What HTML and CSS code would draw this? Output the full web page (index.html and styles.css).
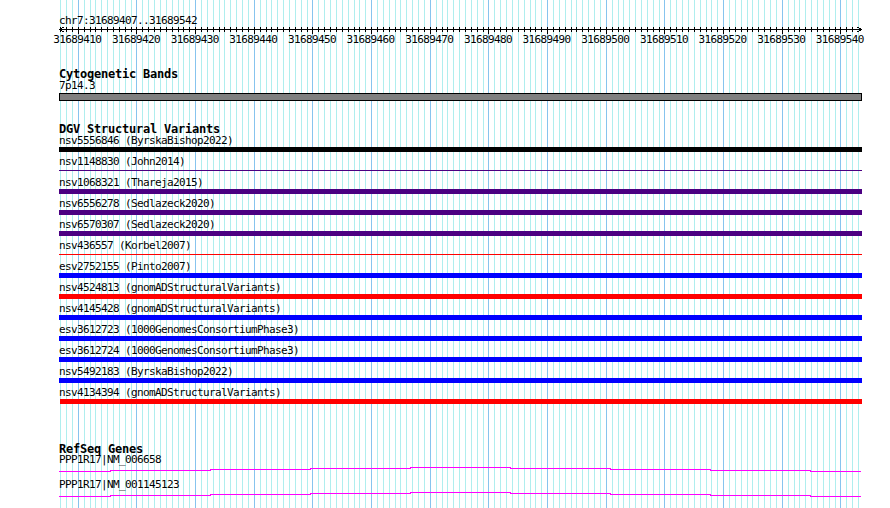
FILE: index.html
```html
<!DOCTYPE html>
<html>
<head>
<meta charset="utf-8">
<title>chr7:31689407..31689542</title>
<link rel="stylesheet" href="styles.css">
</head>
<body>
<svg id="grid" class="grid" width="890" height="508"></svg>
<div class="panel">
  <div class="txt">chr7:31689407..31689542</div>
  <svg id="ruler" class="ruler" width="890" height="7"></svg>
  <div class="labels">
    <span>31689410</span><span>31689420</span><span>31689430</span><span>31689440</span><span>31689450</span><span>31689460</span><span>31689470</span><span>31689480</span><span>31689490</span><span>31689500</span><span>31689510</span><span>31689520</span><span>31689530</span><span>31689540</span>
  </div>

  <div class="title cyto-title">Cytogenetic Bands</div>
  <div class="txt">7p14.3</div>
  <div class="band"></div>

  <div class="title dgv-title">DGV Structural Variants</div>
  <div class="row"><div class="txt">nsv5556846 (ByrskaBishop2022)</div><div class="bar black"></div></div>
  <div class="row"><div class="txt">nsv1148830 (John2014)</div><div class="line purple"></div></div>
  <div class="row"><div class="txt">nsv1068321 (Thareja2015)</div><div class="bar purple"></div></div>
  <div class="row"><div class="txt">nsv6556278 (Sedlazeck2020)</div><div class="bar purple"></div></div>
  <div class="row"><div class="txt">nsv6570307 (Sedlazeck2020)</div><div class="bar purple"></div></div>
  <div class="row"><div class="txt">nsv436557 (Korbel2007)</div><div class="line red"></div></div>
  <div class="row"><div class="txt">esv2752155 (Pinto2007)</div><div class="bar blue"></div></div>
  <div class="row"><div class="txt">nsv4524813 (gnomADStructuralVariants)</div><div class="bar red"></div></div>
  <div class="row"><div class="txt">nsv4145428 (gnomADStructuralVariants)</div><div class="bar blue"></div></div>
  <div class="row"><div class="txt">esv3612723 (1000GenomesConsortiumPhase3)</div><div class="bar blue"></div></div>
  <div class="row"><div class="txt">esv3612724 (1000GenomesConsortiumPhase3)</div><div class="bar blue"></div></div>
  <div class="row"><div class="txt">nsv5492183 (ByrskaBishop2022)</div><div class="bar blue"></div></div>
  <div class="row"><div class="txt">nsv4134394 (gnomADStructuralVariants)</div><div class="bar red inset"></div></div>

  <div class="title ref-title">RefSeq Genes</div>
  <div class="gene">
    <div class="txt">PPP1R17|NM_006658</div>
    <svg class="intron" width="803" height="13"><path d="M0 5.5H51V4.5H151V3.5H251V2.5H351V1.5H451V2.5H551V3.5H651V4.5H751V5.5H802"/></svg>
  </div>
  <div class="gene">
    <div class="txt">PPP1R17|NM_001145123</div>
    <svg class="intron" width="803" height="13"><path d="M0 5.5H51V4.5H151V3.5H251V2.5H351V1.5H451V2.5H551V3.5H651V4.5H751V5.5H802"/></svg>
  </div>
</div>
<script src="grid.js"></script>
</body>
</html>
```

FILE: styles.css
```css
html, body {
  margin: 0;
  padding: 0;
  background: #ffffff;
}
body {
  width: 890px;
  height: 508px;
  overflow: hidden;
  position: relative;
  font-family: "DejaVu Sans Mono", "Liberation Mono", monospace;
  color: #000;
}
.grid {
  position: absolute;
  left: 0;
  top: 0;
  z-index: 0;
}
.grid .minor { fill: #afeeee; }
.grid .major { fill: #87c4ee; }
.panel {
  position: relative;
  z-index: 1;
  padding-top: 15px;
}
.txt {
  font-size: 11px;
  letter-spacing: -0.62px;
  line-height: 12px;
  height: 12px;
  padding-left: 59px;
  white-space: nowrap;
}
.title {
  font-size: 12px;
  font-weight: bold;
  letter-spacing: -0.22px;
  line-height: 12px;
  height: 12px;
  padding-left: 59px;
  white-space: nowrap;
}
.ruler {
  display: block;
  shape-rendering: crispEdges;
}
.ruler rect, .ruler path { fill: #000; }
.ruler .arrow { fill: none; stroke: #000; stroke-width: 1; }
.labels {
  display: flex;
  padding-left: 48px;
  font-size: 11px;
  letter-spacing: -0.62px;
  line-height: 12px;
  height: 12px;
  white-space: nowrap;
}
.labels span {
  flex: none;
  width: 58.667px;
  text-align: center;
}
.cyto-title { margin-top: 22px; }
.band {
  margin: 1px 0 0 59px;
  width: 801px;
  height: 6px;
  border: 1px solid #000;
  background: #808080;
}
.dgv-title { margin-top: 22px; }
.row {
  height: 21px;
}
.bar {
  margin-left: 59px;
  width: 803px;
  height: 5px;
}
.bar.inset {
  margin-left: 60px;
  width: 802px;
}
.line {
  margin: 2px 0 0 59px;
  width: 803px;
  height: 1px;
}
.black { background: #000000; }
.purple { background: #4b0082; }
.red { background: #ff0000; }
.blue { background: #0000ff; }
.ref-title {
  margin-top: 35px;
  margin-bottom: -1px;
}
.gene {
  height: 25px;
}
.intron {
  display: block;
  margin-left: 59px;
  shape-rendering: crispEdges;
}
.intron path {
  fill: none;
  stroke: #ff00ff;
  stroke-width: 1;
}
```

FILE: grid.js
```js
(function () {
  var NS = 'http://www.w3.org/2000/svg';
  var grid = document.getElementById('grid');
  var ruler = document.getElementById('ruler');
  function rect(parent, x, y, w, h, cls) {
    var r = document.createElementNS(NS, 'rect');
    r.setAttribute('x', x);
    r.setAttribute('y', y);
    r.setAttribute('width', w);
    r.setAttribute('height', h);
    if (cls) r.setAttribute('class', cls);
    parent.appendChild(r);
  }
  for (var i = 0; i < 137; i++) {
    var x = Math.floor(60.7 + 5.8667 * i);
    var major = (i - 3) % 10 === 0;
    rect(grid, x, 0, 1, 508, major ? 'major' : 'minor');
    if (i < 136) rect(ruler, x, 0, 1, major ? 7 : 5);
  }
  rect(ruler, 59, 2, 803, 1);
  var a = document.createElementNS(NS, 'path');
  a.setAttribute('class', 'arrow');
  a.setAttribute('d', 'M63.5 0L59.5 2.5L63.5 5 M857.5 0L861.5 2.5L857.5 5');
  ruler.appendChild(a);
})();
```
